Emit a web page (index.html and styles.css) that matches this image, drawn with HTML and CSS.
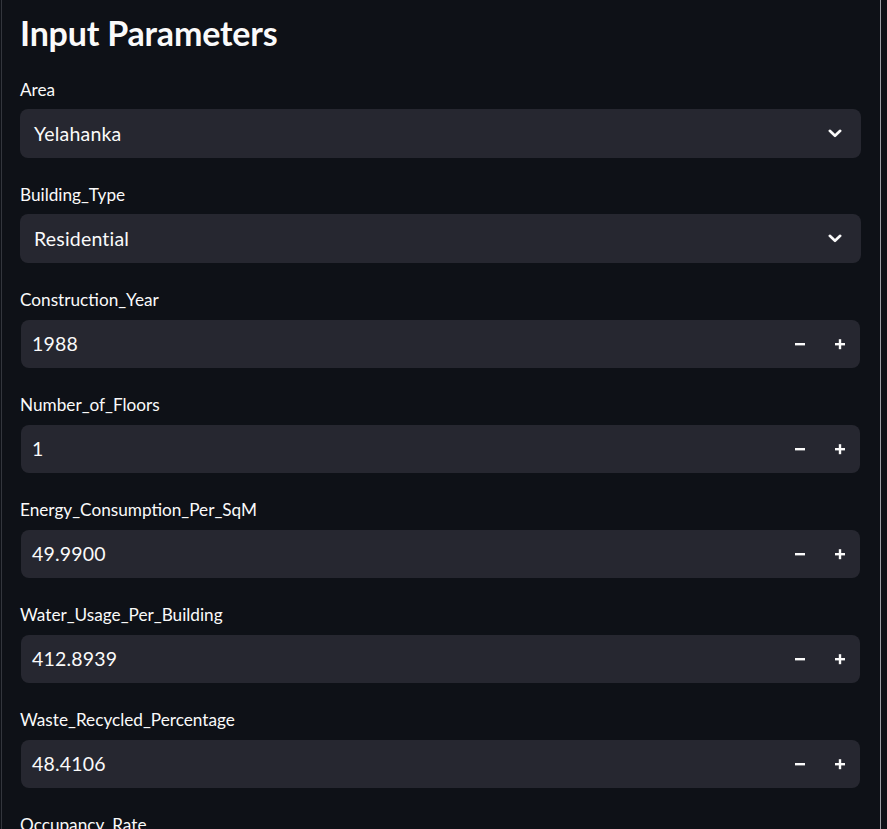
FILE: index.html
```html
<!DOCTYPE html>
<html lang="en">
<head>
<meta charset="utf-8">
<title>Input Parameters</title>
<link rel="stylesheet" href="styles.css">
</head>
<body>
<div class="frame">
  <main class="content">
    <h2 class="title">Input Parameters</h2>

    <div class="widget">
      <label class="label">Area</label>
      <div class="select">
        <span class="value sel-value">Yelahanka</span>
        <svg class="chev" width="14" height="9" viewBox="0 0 14 9"><path d="M1.8 1.8 L7 6.8 L12.2 1.8" fill="none" stroke="#fafafa" stroke-width="2.6" stroke-linecap="round" stroke-linejoin="round"/></svg>
      </div>
    </div>

    <div class="widget">
      <label class="label">Building_Type</label>
      <div class="select">
        <span class="value sel-value">Residential</span>
        <svg class="chev" width="14" height="9" viewBox="0 0 14 9"><path d="M1.8 1.8 L7 6.8 L12.2 1.8" fill="none" stroke="#fafafa" stroke-width="2.6" stroke-linecap="round" stroke-linejoin="round"/></svg>
      </div>
    </div>

    <div class="widget">
      <label class="label">Construction_Year</label>
      <div class="number">
        <span class="value">1988</span>
        <span class="step"><svg width="12" height="12" viewBox="0 0 12 12"><rect x="1" y="5" width="10" height="2.4" fill="#fafafa"/></svg></span>
        <span class="step"><svg width="12" height="12" viewBox="0 0 12 12"><rect x="1" y="5" width="10" height="2.4" fill="#fafafa"/><rect x="4.8" y="1.2" width="2.4" height="10" fill="#fafafa"/></svg></span>
      </div>
    </div>

    <div class="widget">
      <label class="label">Number_of_Floors</label>
      <div class="number">
        <span class="value">1</span>
        <span class="step"><svg width="12" height="12" viewBox="0 0 12 12"><rect x="1" y="5" width="10" height="2.4" fill="#fafafa"/></svg></span>
        <span class="step"><svg width="12" height="12" viewBox="0 0 12 12"><rect x="1" y="5" width="10" height="2.4" fill="#fafafa"/><rect x="4.8" y="1.2" width="2.4" height="10" fill="#fafafa"/></svg></span>
      </div>
    </div>

    <div class="widget">
      <label class="label">Energy_Consumption_Per_SqM</label>
      <div class="number">
        <span class="value">49.9900</span>
        <span class="step"><svg width="12" height="12" viewBox="0 0 12 12"><rect x="1" y="5" width="10" height="2.4" fill="#fafafa"/></svg></span>
        <span class="step"><svg width="12" height="12" viewBox="0 0 12 12"><rect x="1" y="5" width="10" height="2.4" fill="#fafafa"/><rect x="4.8" y="1.2" width="2.4" height="10" fill="#fafafa"/></svg></span>
      </div>
    </div>

    <div class="widget">
      <label class="label">Water_Usage_Per_Building</label>
      <div class="number">
        <span class="value">412.8939</span>
        <span class="step"><svg width="12" height="12" viewBox="0 0 12 12"><rect x="1" y="5" width="10" height="2.4" fill="#fafafa"/></svg></span>
        <span class="step"><svg width="12" height="12" viewBox="0 0 12 12"><rect x="1" y="5" width="10" height="2.4" fill="#fafafa"/><rect x="4.8" y="1.2" width="2.4" height="10" fill="#fafafa"/></svg></span>
      </div>
    </div>

    <div class="widget">
      <label class="label">Waste_Recycled_Percentage</label>
      <div class="number">
        <span class="value">48.4106</span>
        <span class="step"><svg width="12" height="12" viewBox="0 0 12 12"><rect x="1" y="5" width="10" height="2.4" fill="#fafafa"/></svg></span>
        <span class="step"><svg width="12" height="12" viewBox="0 0 12 12"><rect x="1" y="5" width="10" height="2.4" fill="#fafafa"/><rect x="4.8" y="1.2" width="2.4" height="10" fill="#fafafa"/></svg></span>
      </div>
    </div>

    <div class="widget">
      <label class="label">Occupancy_Rate</label>
      <div class="number">
        <span class="value">0.7500</span>
        <span class="step"><svg width="12" height="12" viewBox="0 0 12 12"><rect x="1" y="5" width="10" height="2.4" fill="#fafafa"/></svg></span>
        <span class="step"><svg width="12" height="12" viewBox="0 0 12 12"><rect x="1" y="5" width="10" height="2.4" fill="#fafafa"/><rect x="4.8" y="1.2" width="2.4" height="10" fill="#fafafa"/></svg></span>
      </div>
    </div>
  </main>
</div>
</body>
</html>
```

FILE: styles.css
```css
html, body {
  margin: 0;
  padding: 0;
  background: #0e1117;
  height: 100%;
  overflow: hidden;
}

body {
  font-family: "Lato", "Noto Sans", sans-serif;
  color: #fafafa;
}

.frame {
  margin-left: 1px;
  width: 878px;
  min-height: 100%;
  border-left: 1px solid #33363d;
  border-right: 1px solid #9a9ca2;
}

.content {
  padding: 11px 19px 0 18px;
  display: flex;
  flex-direction: column;
  gap: 26px;
}

.title {
  margin: 0 0 -2px 0;
  font-size: 34px;
  line-height: 44px;
  font-weight: 700;
  letter-spacing: -0.2px;
}

.widget {
  display: flex;
  flex-direction: column;
}

.label {
  font-size: 17.2px;
  line-height: 22px;
  margin-bottom: 8px;
}

.select {
  height: 49px;
  background: #262730;
  border-radius: 8px;
  display: flex;
  align-items: center;
  padding: 0 19px 0 14px;
}

.number {
  height: 48px;
  margin: 1px 1px 0 1px;
  background: #262730;
  border-radius: 8px;
  display: flex;
  align-items: center;
  padding-left: 11px;
}

.value {
  flex: 1;
  font-size: 19.5px;
  line-height: 24px;
  letter-spacing: 0.2px;
}

.chev {
  display: block;
}

.step {
  width: 40px;
  height: 100%;
  display: flex;
  align-items: center;
  justify-content: center;
}
```
